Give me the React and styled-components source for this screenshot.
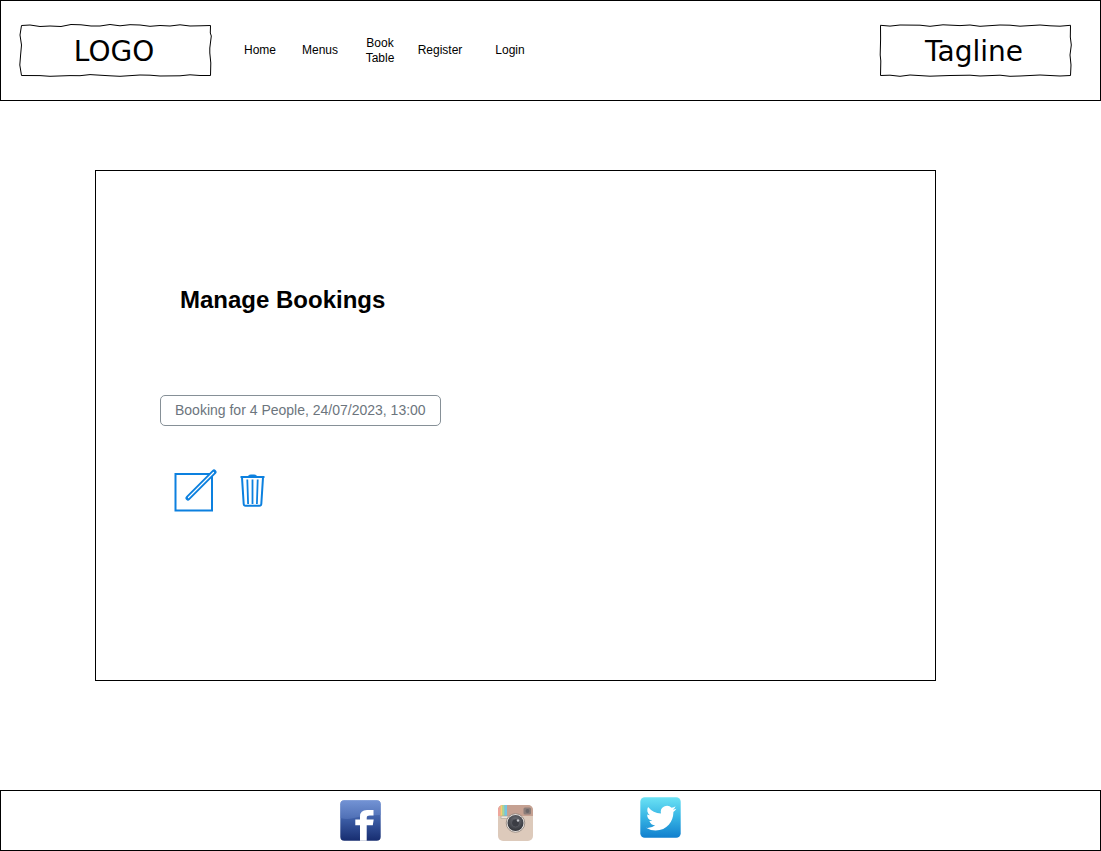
import React from "react";
import styled, { createGlobalStyle } from "styled-components";

const GlobalStyle = createGlobalStyle`
  *, *::before, *::after { box-sizing: border-box; }
  body {
    margin: 0;
    background: #fff;
    color: #000;
    font-family: "Liberation Sans", Arial, sans-serif;
  }
`;

const Page = styled.div`
  display: flex;
  flex-direction: column;
  min-height: 100vh;
`;

const Header = styled.header`
  display: flex;
  align-items: center;
  min-height: 101px;
  padding: 0 29px 0 18px;
  border: 1px solid #000;
`;

const SketchBox = styled.div`
  display: grid;
  place-items: center;
  flex: none;
  width: 192px;
  height: 55px;
  font-family: "DejaVu Sans", Verdana, sans-serif;
  font-size: 28px;
  line-height: 32px;

  > * { grid-area: 1 / 1; }
  svg { place-self: start; overflow: visible; }
  span { padding: 2px 2px 0 0; }
`;

const Nav = styled.nav`
  flex: 1;
  margin-left: 19px;
`;

const NavList = styled.ul`
  display: flex;
  align-items: center;
  margin: 0;
  padding: 0;
  list-style: none;
`;

const NavItem = styled.li`
  width: ${(p) => (p.$wide ? "80px" : "60px")};
  padding: 0 ${(p) => (p.$wide ? "10px" : "12px")};
  display: flex;
  justify-content: center;
`;

const NavLink = styled.a`
  color: #000;
  font-size: 12px;
  line-height: 15px;
  text-align: center;
  text-decoration: none;
`;

const Main = styled.main`
  flex: 1;
  padding: 69px 165px 109px 95px;
`;

const Card = styled.section`
  min-height: 511px;
  padding: 114px 64px;
  border: 1px solid #000;
`;

const Title = styled.h1`
  margin: 0;
  padding-left: 20px;
  font-size: 24px;
  line-height: 30px;
`;

const Booking = styled.button`
  display: block;
  margin-top: 80px;
  min-width: 281px;
  padding: 0 14px 1px;
  border: 1px solid #869097;
  border-radius: 5px;
  background: #fff;
  color: #6c757d;
  font-family: inherit;
  font-size: 14px;
  line-height: 28px;
  text-align: left;
  white-space: nowrap;
`;

const Actions = styled.div`
  display: flex;
  align-items: center;
  gap: 22px;
  margin-top: 42px;
  padding-left: 13px;
`;

const IconButton = styled.button`
  display: block;
  padding: 0;
  border: 0;
  background: none;
  color: #0c80df;

  svg { display: block; }
`;

const Footer = styled.footer`
  display: flex;
  justify-content: center;
  gap: 90px;
  min-height: 61px;
  padding-right: 81px;
  border: 1px solid #000;
`;

const SocialLink = styled.a`
  display: block;
  height: 59px;

  svg { display: block; }
`;

const outlines = {
  logo: "M2.5 2.5 L11 2 L21 3.5 L31 3 L42 3.5 L52 1.5 L62 1.8 L72 3 L81 3 L91 1.5 L101 2.8 L111 1.7 L121 2 L131 3.3 L141 2.5 L151 3 L161 1.8 L171 3 L181 2.8 L191.5 2.5 L191.3 10 L192.3 13 L190.8 25 L190.8 30 L191.8 40 L191.5 52.5 L181 52.5 L171 51.8 L161 52.8 L141 53 L131 52.2 L121 52 L101 53.3 L91 52.8 L71 51.6 L61 52.7 L51 52.6 L31 53.3 L21 52.6 L2.5 52.5 L0.8 42 L1.6 32 L2.5 22 L1 12 Z",
  tagline: "M1.5 2.3 L11 3.1 L21 2 L41 2.2 L51 3.3 L64 1.8 L81 2.6 L91 2 L101 3.3 L121 2 L131 2.2 L141 3.2 L161 2 L171 2.8 L181 3.2 L191.5 2.3 L191.3 14 L192.3 22 L191 32 L192 42 L191.5 52.5 L181 53 L161 52 L141 53 L131 53.3 L121 52.2 L101 53 L91 52.2 L71 52.5 L51 53.2 L31 52 L21 53.3 L11 52.2 L1.5 52.5 L1.8 38 L1.2 32 L1.6 16 Z",
};

function Sketch({ shape, children }) {
  return (
    <SketchBox>
      <svg width="192" height="54" viewBox="0 0 192 54" aria-hidden="true">
        <path d={outlines[shape]} fill="#fff" stroke="#000" strokeLinejoin="round" />
      </svg>
      <span>{children}</span>
    </SketchBox>
  );
}

function EditIcon() {
  return (
    <svg width="44" height="44" viewBox="0 0 44 44" fill="none" stroke="currentColor" strokeWidth="2">
      <path d="M2.5 6H39V42.5H2.5Z" />
      <path d="M15 30L41 4" strokeWidth="5" strokeLinecap="round" />
      <path d="M15.5 29.5L40.5 4.5" stroke="#fff" strokeWidth="1.2" strokeLinecap="round" />
    </svg>
  );
}

function TrashIcon() {
  return (
    <svg width="28" height="36" viewBox="0 0 28 36" fill="none" stroke="currentColor" strokeWidth="2">
      <path d="M1.5 5H25.5" />
      <path d="M9 5Q9.5 3 11.5 3H15.5Q17.5 3 18 5Z" fill="currentColor" strokeWidth="1" />
      <path d="M3 5.5L4.7 32Q4.9 33.8 6.5 33.8H20.5Q22.1 33.8 22.3 32L24 5.5" />
      <path d="M8.3 7.5L9.1 32M13.5 7.5V32M18.7 7.5L17.9 32" strokeWidth="1.8" />
    </svg>
  );
}

function FacebookIcon() {
  return (
    <svg width="60" height="59" viewBox="0 0 60 59">
      <defs>
        <linearGradient id="fbBase" x1="0" y1="0" x2="0" y2="1">
          <stop offset="0" stopColor="#6384c8" />
          <stop offset="0.5" stopColor="#3a5aa2" />
          <stop offset="1" stopColor="#172d70" />
        </linearGradient>
        <linearGradient id="fbShine" x1="0" y1="0" x2="0" y2="1">
          <stop offset="0" stopColor="#7b9bdb" />
          <stop offset="1" stopColor="#5878bd" />
        </linearGradient>
      </defs>
      <rect x="10.3" y="9.3" width="40.4" height="40.4" rx="4" fill="url(#fbBase)" />
      <path d="M10.3 27V13.3Q10.3 9.3 14.3 9.3H46.7Q50.7 9.3 50.7 13.3V24Q34 24 26 26.5Q18 29 10.3 27Z" fill="url(#fbShine)" opacity="0.65" />
      <path d="M30 49.7V34.3H25.3V28.5H30V25.5Q30 19 37 19H43.5V24.6H39.7Q36.7 24.6 36.7 27V28.5H43.7L42.8 34.3H36.7V49.7Z" fill="#fff" />
    </svg>
  );
}

function InstagramIcon() {
  return (
    <svg width="60" height="59" viewBox="0 0 60 59">
      <defs>
        <clipPath id="igBody"><rect x="18" y="14" width="35" height="36" rx="5" /></clipPath>
        <radialGradient id="igLens" cx="0.5" cy="0.35" r="0.65">
          <stop offset="0" stopColor="#73757b" />
          <stop offset="0.6" stopColor="#4b4d53" />
          <stop offset="1" stopColor="#303238" />
        </radialGradient>
      </defs>
      <g clipPath="url(#igBody)">
        <path d="M18 14H53V50H18Z" fill="#ddcabb" />
        <path d="M18 14H53V25H18Z" fill="#c5a192" />
        <path d="M18 14H20.5V25H18Z" fill="#efa79c" />
        <path d="M20.5 14H22.5V25H20.5Z" fill="#f8d070" />
        <path d="M22.5 14H24.5V25H22.5Z" fill="#a0dc9a" />
        <path d="M24.5 14H27V25H24.5Z" fill="#72c6e4" />
      </g>
      <rect x="21" y="25" width="7" height="2.5" fill="#efe7df" stroke="#a99b91" strokeWidth="0.6" />
      <rect x="43.5" y="16.5" width="7.5" height="7" rx="1.5" fill="#8b7d79" />
      <circle cx="47.5" cy="20" r="2" fill="#6b6668" />
      <circle cx="35.5" cy="32" r="9.3" fill="#eee9e5" stroke="#8d817a" strokeWidth="0.8" />
      <circle cx="35.5" cy="32" r="8" fill="url(#igLens)" />
      <circle cx="35.5" cy="32" r="4" fill="#3b3d44" stroke="#5b5d64" strokeWidth="0.7" />
      <circle cx="38" cy="29.5" r="1.2" fill="#c6c8cd" />
    </svg>
  );
}

function TwitterIcon() {
  return (
    <svg width="60" height="59" viewBox="0 0 60 59">
      <defs>
        <linearGradient id="twBase" x1="0" y1="0" x2="0" y2="1">
          <stop offset="0" stopColor="#6be2f4" />
          <stop offset="0.5" stopColor="#36b4e4" />
          <stop offset="1" stopColor="#117fce" />
        </linearGradient>
      </defs>
      <rect x="10.3" y="6.3" width="40.4" height="40.4" rx="4.5" fill="url(#twBase)" />
      <path
        transform="translate(16 12) scale(1.27)"
        d="M23.95 4.57a10 10 0 0 1-2.82.77 4.96 4.96 0 0 0 2.16-2.72c-.95.56-2 .95-3.13 1.18a4.92 4.92 0 0 0-8.38 4.48A13.94 13.94 0 0 1 1.64 3.16a4.92 4.92 0 0 0 1.52 6.57 4.9 4.9 0 0 1-2.23-.61v.06a4.92 4.92 0 0 0 3.95 4.83 5 5 0 0 1-2.21.08 4.94 4.94 0 0 0 4.6 3.42A9.87 9.87 0 0 1 0 19.54a14 14 0 0 0 7.55 2.21c9.05 0 14-7.5 14-13.98v-.64a9.94 9.94 0 0 0 2.4-2.56Z"
        fill="#fff"
      />
    </svg>
  );
}

const links = [
  { label: "Home" },
  { label: "Menus" },
  { label: "Book Table" },
  { label: "Register" },
  { label: "Login", wide: true },
];

const socials = [
  { label: "Facebook", Icon: FacebookIcon },
  { label: "Instagram", Icon: InstagramIcon },
  { label: "Twitter", Icon: TwitterIcon },
];

export default function App() {
  return (
    <Page>
      <GlobalStyle />
      <Header>
        <Sketch shape="logo">LOGO</Sketch>
        <Nav>
          <NavList>
            {links.map(({ label, wide }) => (
              <NavItem key={label} $wide={wide}>
                <NavLink href="#">{label}</NavLink>
              </NavItem>
            ))}
          </NavList>
        </Nav>
        <Sketch shape="tagline">Tagline</Sketch>
      </Header>
      <Main>
        <Card>
          <Title>Manage Bookings</Title>
          <Booking type="button">Booking for 4 People, 24/07/2023, 13:00</Booking>
          <Actions>
            <IconButton type="button" aria-label="Edit booking"><EditIcon /></IconButton>
            <IconButton type="button" aria-label="Delete booking"><TrashIcon /></IconButton>
          </Actions>
        </Card>
      </Main>
      <Footer>
        {socials.map(({ label, Icon }) => (
          <SocialLink key={label} href="#" aria-label={label}><Icon /></SocialLink>
        ))}
      </Footer>
    </Page>
  );
}
